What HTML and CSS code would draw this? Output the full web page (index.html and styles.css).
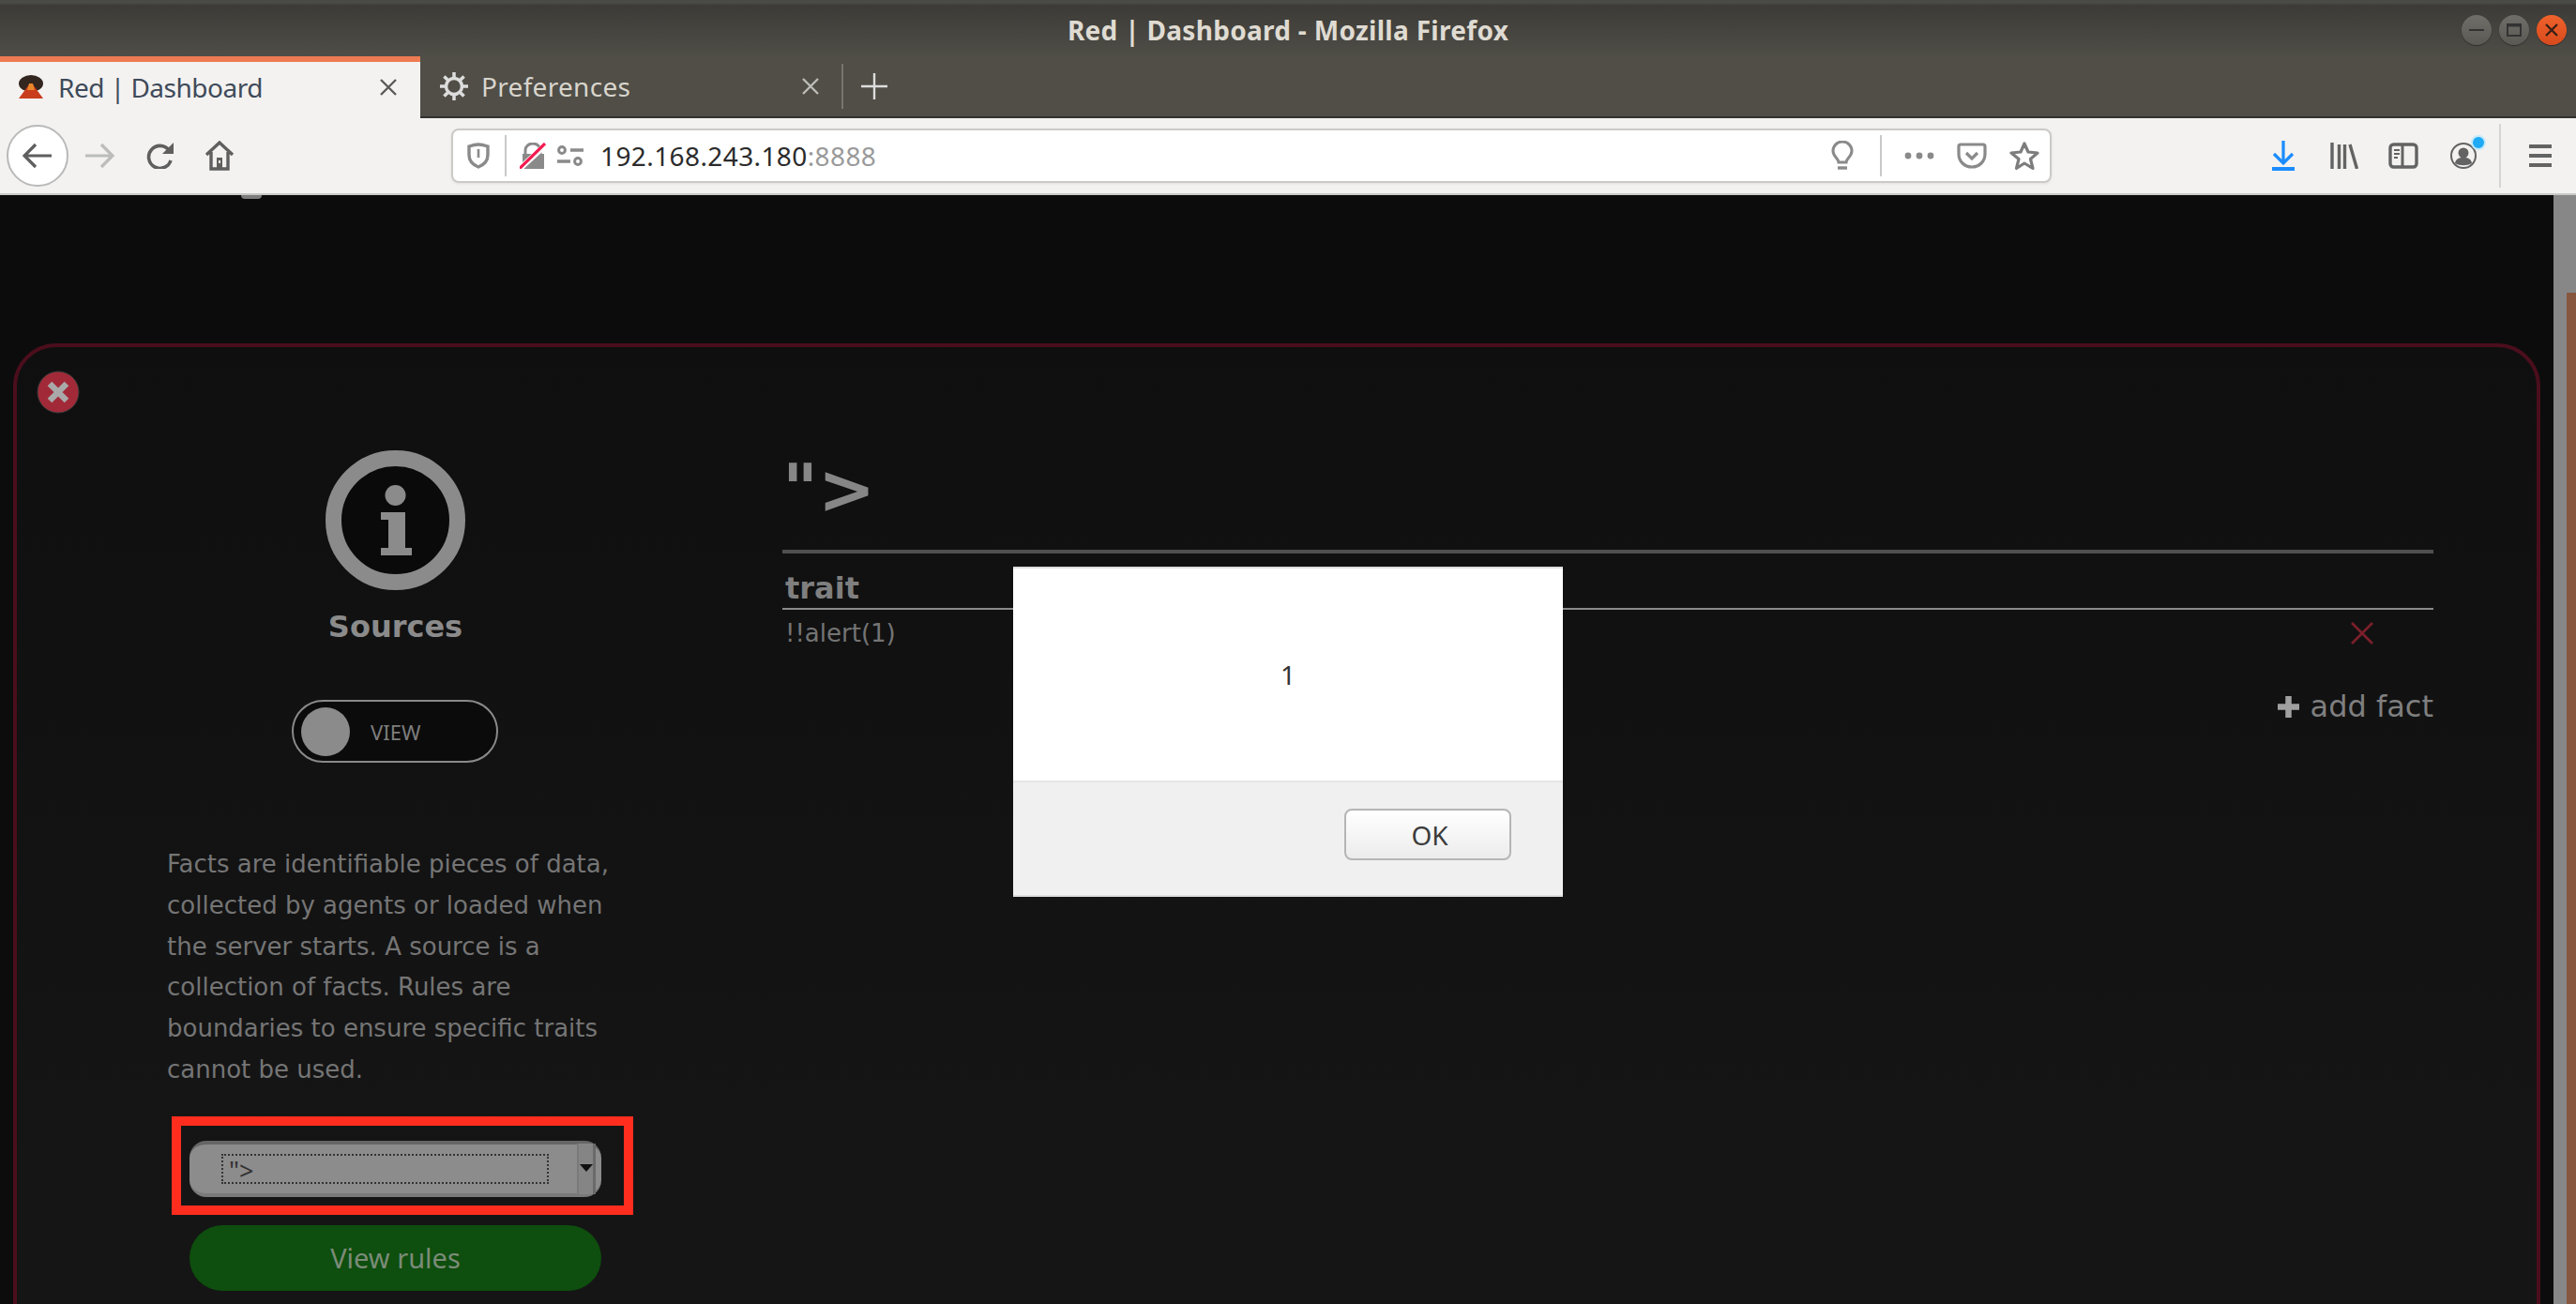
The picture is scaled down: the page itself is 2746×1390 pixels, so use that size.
FILE: index.html
```html
<!DOCTYPE html>
<html lang="en">
<head>
    <meta charset="UTF-8">
    <meta name="viewport" content="width=device-width, initial-scale=1.0">
    <title>Red | Dashboard - Mozilla Firefox</title>
    <link rel="stylesheet" href="styles.css">
</head>
<body>

    <header class="chrome">
        <div class="titlebar">
            <span class="win-title">Red | Dashboard - Mozilla Firefox</span>
            <div class="win-buttons">
                <span class="win-btn"><svg viewBox="0 0 32 32" width="32" height="32"><path d="M8 16h16" stroke="#333" stroke-width="2"/></svg></span>
                <span class="win-btn"><svg viewBox="0 0 32 32" width="32" height="32"><rect x="9" y="10" width="14" height="12" fill="none" stroke="#333" stroke-width="2"/><path d="M9 11h14" stroke="#333" stroke-width="3"/></svg></span>
                <span class="win-btn win-close"><svg viewBox="0 0 32 32" width="32" height="32"><path d="M10 10l12 12M22 10L10 22" stroke="#3a2015" stroke-width="2.4"/></svg></span>
            </div>
        </div>
        <div class="tabstrip">
            <div class="tab tab-active">
                <svg class="favicon" viewBox="0 0 30 26" width="30" height="26"><ellipse cx="15" cy="9" rx="13" ry="9" fill="#33261f"/><path d="M13 10h4l11 15H2z" fill="#c93c1c"/><path d="M13 9h4l2 7h-8z" fill="#e8872a"/></svg>
                <span class="tab-label">Red | Dashboard</span>
                <svg class="tab-x" viewBox="0 0 20 20" width="20" height="20"><path d="M2 2l16 16M18 2L2 18" stroke="#5a5a5a" stroke-width="2.4"/></svg>
            </div>
            <div class="tab tab-other">
                <svg class="gear" viewBox="0 0 32 32" width="32" height="32"><circle cx="16" cy="16" r="8.5" fill="none" stroke="#ddd" stroke-width="3.5"/><path d="M16 1v6M16 25v6M1 16h6M25 16h6M5.4 5.4l4.2 4.2M22.4 22.4l4.2 4.2M26.6 5.4l-4.2 4.2M9.6 22.4l-4.2 4.2" stroke="#ddd" stroke-width="3.5"/></svg>
                <span class="tab-label">Preferences</span>
                <svg class="tab-x" viewBox="0 0 20 20" width="20" height="20"><path d="M2 2l16 16M18 2L2 18" stroke="#bdbcb7" stroke-width="2.4"/></svg>
            </div>
            <svg class="new-tab" viewBox="0 0 28 28" width="28" height="28"><path d="M14 0v28M0 14h28" stroke="#ddd" stroke-width="2.4"/></svg>
        </div>
        <nav class="toolbar">
            <span class="back-btn"><svg viewBox="0 0 32 28" width="32" height="28"><path d="M31 14H3M14 2L2 14l12 12" fill="none" stroke="#5f5f5f" stroke-width="3.2"/></svg></span>
            <svg class="ico-forward" viewBox="0 0 32 28" width="32" height="28"><path d="M1 14h28M18 2l12 12-12 12" fill="none" stroke="#bcbcbc" stroke-width="3.2"/></svg>
            <svg class="ico-reload" viewBox="0 0 32 28" width="32" height="28"><path d="M25 8A12 12 0 1 0 27 19" fill="none" stroke="#5f5f5f" stroke-width="3.6"/><path d="M30 0v12H18z" fill="#5f5f5f"/></svg>
            <svg class="ico-home" viewBox="0 0 32 32" width="32" height="32"><path d="M2 15L16 2l14 13M7 12v18h18V12" fill="none" stroke="#5f5f5f" stroke-width="3.4"/><rect x="13" y="18" width="6" height="12" fill="#5f5f5f"/><rect x="15" y="21" width="2" height="3" fill="#f3f2f0"/></svg>

            <div class="urlbar">
                <svg class="ico-shield" viewBox="0 0 24 28" width="24" height="28"><path d="M12 2C8 2 5 3 2 4v9c0 7 5 11 10 13 5-2 10-6 10-13V4c-3-1-6-2-10-2z" fill="none" stroke="#8a8a8a" stroke-width="3.4"/><path d="M12 7v9" stroke="#8a8a8a" stroke-width="2.6"/></svg>
                <i class="url-sep"></i>
                <svg class="ico-lock" viewBox="0 0 28 28" width="28" height="28"><path d="M6 12V8a8 7 0 0 1 16 0v4" fill="none" stroke="#8a8a8a" stroke-width="3"/><rect x="3" y="12" width="23" height="16" fill="#8a8a8a"/><path d="M1 27L27 3" stroke="#fff" stroke-width="6"/><path d="M0 27.5L27 1" stroke="#f3194f" stroke-width="3.2"/></svg>
                <svg class="ico-perm" viewBox="0 0 28 24" width="28" height="24"><circle cx="5" cy="6" r="3.4" fill="none" stroke="#8a8a8a" stroke-width="3"/><path d="M14 6h14M0 18h14" stroke="#8a8a8a" stroke-width="3.4"/><circle cx="22" cy="18" r="3.4" fill="none" stroke="#8a8a8a" stroke-width="3"/></svg>
                <span class="url-text">192.168.243.180<span class="url-port">:8888</span></span>
                <svg class="ico-bulb" viewBox="0 0 24 32" width="24" height="32"><path d="M8 23c0-4-6-6-6-12a10 10 0 0 1 20 0c0 6-6 8-6 12z" fill="none" stroke="#8a8a8a" stroke-width="3"/><path d="M7 29h10" stroke="#8a8a8a" stroke-width="3.4"/></svg>
                <i class="url-sep url-sep-right"></i>
                <svg class="ico-dots" viewBox="0 0 32 8" width="32" height="8"><circle cx="4" cy="4" r="3.4" fill="#8a8a8a"/><circle cx="16" cy="4" r="3.4" fill="#8a8a8a"/><circle cx="28" cy="4" r="3.4" fill="#8a8a8a"/></svg>
                <svg class="ico-pocket" viewBox="0 0 32 28" width="32" height="28"><path d="M4 2h24a2 2 0 0 1 2 2v8c0 8-6 14-14 14S2 20 2 12V4a2 2 0 0 1 2-2z" fill="none" stroke="#8a8a8a" stroke-width="3.2"/><path d="M10 11l6 6 6-6" fill="none" stroke="#8a8a8a" stroke-width="3.2"/></svg>
                <svg class="ico-star" viewBox="0 0 32 32" width="32" height="32"><path d="M16 3l4 9 10 1-7.500 6.500 2.500 10L16 24l-8.500 5.500 2.500-10L2 13l10-1z" fill="none" stroke="#7d7d7d" stroke-width="3.2" stroke-linejoin="round"/></svg>
            </div>

            <svg class="ico-download" viewBox="0 0 24 32" width="24" height="32"><path d="M12 0v25M2 14l10 10 10-10" fill="none" stroke="#1a8cff" stroke-width="3.2"/><path d="M0 30h24" stroke="#1a8cff" stroke-width="4"/></svg>
            <svg class="ico-library" viewBox="0 0 30 28" width="30" height="28"><path d="M2 0v28M9.500 2v26M15.500 2v26M21 2l7.500 26" stroke="#636363" stroke-width="3.4" fill="none"/></svg>
            <svg class="ico-sidebar" viewBox="0 0 32 28" width="32" height="28"><rect x="2" y="2" width="28" height="24" rx="3.500" fill="none" stroke="#636363" stroke-width="3.4"/><path d="M15 2v24" stroke="#636363" stroke-width="3"/><path d="M6 8h6M6 12h6M6 16h4" stroke="#636363" stroke-width="2"/></svg>
            <span class="account">
                <svg viewBox="0 0 28 28" width="28" height="28"><circle cx="14" cy="14" r="13" fill="none" stroke="#636363" stroke-width="2"/><circle cx="14" cy="11" r="5.500" fill="#636363"/><path d="M5 22c1-5 4-6 9-6s8 1 9 6c-5 3-13 3-18 0z" fill="#636363"/></svg>
                <i class="account-dot"></i>
            </span>
            <i class="toolbar-sep"></i>
            <svg class="ico-menu" viewBox="0 0 24 24" width="24" height="24"><path d="M0 2h24M0 12h24M0 22h24" stroke="#636363" stroke-width="4"/></svg>
        </nav>
    </header>

    <div class="viewport">
        <main class="page">
            <i class="heading-tail"></i>

            <section class="panel">
                <svg class="panel-close" viewBox="0 0 46 46" width="46" height="46"><circle cx="23" cy="23" r="22" fill="#a22a38" stroke="#3a3a3a" stroke-width="1"/><path d="M14 14l18 18M32 14L14 32" stroke="#a9a9a9" stroke-width="6.500"/></svg>

                <div class="side">
                    <svg class="info-icon" viewBox="0 0 149 149" width="149" height="149"><circle cx="74.500" cy="74.500" r="66" fill="#0a0a0a" stroke="#8b8b8b" stroke-width="17"/><circle cx="74.500" cy="48" r="11" fill="#8b8b8b"/><path d="M59 66h26v38h7v8H59v-8h8V74h-8z" fill="#8b8b8b"/></svg>
                    <h2 class="side-title">Sources</h2>
                    <div class="toggle">
                        <i class="toggle-knob"></i>
                        <span class="toggle-label">VIEW</span>
                    </div>
                    <p class="side-text">Facts are identifiable pieces of data,<br>collected by agents or loaded when<br>the server starts. A source is a<br>collection of facts. Rules are<br>boundaries to ensure specific traits<br>cannot be used.</p>
                    <div class="select-wrap">
                        <div class="select">
                            <span class="select-focus">"&gt;</span>
                            <span class="select-arrow"></span>
                        </div>
                        <i class="annotation"></i>
                    </div>
                    <button class="rules-btn">View rules</button>
                </div>

                <div class="detail">
                    <h1 class="detail-title">"&gt;</h1>
                    <div class="col-head">trait</div>
                    <div class="fact-row">
                        <span>!!alert(1)</span>
                        <svg class="fact-x" viewBox="0 0 24 24" width="24" height="24"><path d="M1 1l22 22M23 1L1 23" stroke="#7c1f2b" stroke-width="2.600"/></svg>
                    </div>
                    <div class="add-fact">
                        <svg viewBox="0 0 25 25" width="25" height="25"><path d="M12.500 1v23M1 12.500h23" stroke="#a0a0a0" stroke-width="6.500"/></svg>
                        <span>add fact</span>
                    </div>
                </div>
            </section>

            <div class="alert">
                <div class="alert-body">1</div>
                <div class="alert-foot"><button class="alert-ok">OK</button></div>
            </div>
        </main>
        <div class="scrollbar"><div class="scroll-thumb"></div></div>
    </div>

</body>
</html>
```

FILE: styles.css
```css
* {
    box-sizing: border-box;
}

html, body {
    margin: 0;
    padding: 0;
    height: 100%;
    overflow: hidden;
}

body {
    display: flex;
    flex-direction: column;
    background-color: #0c0c0c;
    font-family: 'Noto Sans', sans-serif;
}

i {
    display: block;
}

svg {
    display: block;
    flex: none;
}

/* window + browser chrome */
.chrome {
    flex: none;
    background: linear-gradient(#4a4a47 0, #4a4a47 3px, #3c3b37 6px, #504e47 62px, #504e47 100%);
}

.titlebar {
    height: 60px;
    display: grid;
    grid-template-columns: 1fr auto 1fr;
    align-items: center;
}

.win-title {
    grid-column: 2;
    color: #dfdbd2;
    font-size: 28px;
    font-weight: 700;
    letter-spacing: 0.3px;
    padding-top: 3px;
}

.win-buttons {
    grid-column: 3;
    justify-self: end;
    display: flex;
    gap: 8px;
    margin-right: 10px;
    margin-top: 4px;
}

.win-btn {
    width: 32px;
    height: 32px;
    border-radius: 50%;
    background: linear-gradient(#6f6e69, #5a5954);
    box-shadow: 0 1px 1px #2f2e2b;
}

.win-close {
    background: linear-gradient(#f0622c, #d84a1c);
}

.tabstrip {
    height: 66px;
    display: flex;
    align-items: center;
    border-bottom: 2px solid #33322f;
}

.tab {
    height: 64px;
    display: flex;
    align-items: center;
    font-size: 28px;
}

.tab-active {
    width: 448px;
    padding: 0 24px 6px 18px;
    background-color: #f3f2f0;
    border-top: 6px solid #ee7b52;
    color: #3f4a5a;
    margin-bottom: -2px;
    height: 66px;
}

.tab-active .tab-label {
    margin-left: 14px;
    flex: 1;
    letter-spacing: -0.5px;
}

.tab-other {
    width: 451px;
    padding: 0 23px 0 20px;
    color: #d8d5cd;
    border-right: 2px solid #77756e;
    height: 48px;
}

.tab-other .tab-label {
    margin-left: 13px;
    flex: 1;
    letter-spacing: 0.3px;
}

.new-tab {
    margin-left: 19px;
}

.toolbar {
    height: 82px;
    background-color: #f3f2f0;
    border-bottom: 2px solid #c9c9c7;
    display: flex;
    align-items: center;
    padding-left: 7px;
}

.back-btn {
    width: 66px;
    height: 66px;
    border-radius: 50%;
    background-color: #fff;
    border: 2px solid #b9b9b9;
    display: flex;
    align-items: center;
    justify-content: center;
}

.ico-forward { margin-left: 17px; }
.ico-reload { margin-left: 33px; }
.ico-home { margin-left: 31px; }

.urlbar {
    width: 1706px;
    height: 58px;
    margin-left: 231px;
    background-color: #fff;
    border: 2px solid #cbcac7;
    border-radius: 8px;
    box-shadow: 0 1px 3px rgba(0, 0, 0, 0.08);
    display: flex;
    align-items: center;
    padding: 0 11px 0 15px;
}

.url-sep {
    width: 2px;
    height: 44px;
    background-color: #c9c9c9;
    margin-left: 16px;
}

.ico-lock { margin-left: 14px; }
.ico-perm { margin-left: 12px; }

.url-text {
    margin-left: 18px;
    font-size: 28px;
    letter-spacing: 0.4px;
    color: #2b2b2b;
    flex: 1;
}

.url-port {
    color: #9a9a9a;
}

.url-sep-right { margin-left: 28px; }
.ico-dots { margin-left: 24px; }
.ico-pocket { margin-left: 24px; }
.ico-star { margin-left: 24px; }

.ico-download { margin-left: 235px; }
.ico-library { margin-left: 38px; }
.ico-sidebar { margin-left: 32px; }

.account {
    position: relative;
    margin-left: 34px;
}

.account-dot {
    position: absolute;
    left: 24px;
    top: -6px;
    width: 12px;
    height: 12px;
    border-radius: 50%;
    background-color: #1eaaf5;
    box-shadow: 0 0 0 2px #c4e9fb;
}

.toolbar-sep {
    width: 2px;
    height: 68px;
    background-color: #d5d4d1;
    margin-left: 24px;
}

.ico-menu { margin-left: 30px; }

/* page */
.viewport {
    flex: 1;
    min-height: 0;
    display: flex;
}

.page {
    flex: 1;
    min-width: 0;
    position: relative;
    overflow: hidden;
    font-family: 'DejaVu Sans', sans-serif;
    color: #7f7f7f;
}

.heading-tail {
    position: absolute;
    left: 257px;
    top: 0;
    width: 22px;
    height: 4px;
    background-color: #7d7d7d;
    border-radius: 0 0 10px 10px;
}

.panel {
    position: relative;
    margin: 158px 14px 0;
    height: 1400px;
    background: linear-gradient(#0f0f10, #151515 900px);
    border: 4px solid #4b0e1c;
    border-radius: 46px;
    display: grid;
    grid-template-columns: 806px 1fr;
    column-gap: 10px;
    padding-right: 110px;
}

.panel-close {
    position: absolute;
    left: 21px;
    top: 25px;
}

.side {
    display: flex;
    flex-direction: column;
    align-items: center;
    padding-top: 110px;
}

.side-title {
    margin: 20px 0 0 1px;
    font-size: 32px;
    line-height: 38px;
    font-weight: 700;
    color: #8b8b8b;
}

.toggle {
    width: 220px;
    height: 67px;
    margin-top: 59px;
    border: 2px solid #8a8a8a;
    border-radius: 34px;
    background-color: #0b0b0b;
    display: flex;
    align-items: center;
    padding-left: 8px;
}

.toggle-knob {
    width: 52px;
    height: 52px;
    border-radius: 50%;
    background-color: #8b8b8b;
}

.toggle-label {
    margin-left: 22px;
    font-family: 'Noto Sans', sans-serif;
    font-size: 22px;
    color: #7d7d7d;
}

.side-text {
    width: 490px;
    margin: 87px 0 0 4px;
    font-size: 26px;
    line-height: 43.800px;
    color: #757575;
}

.select-wrap {
    position: relative;
    width: 439px;
    margin: 53px 0 0 1px;
}

.select {
    height: 60px;
    background-color: #8c8c8c;
    border-top: 4px solid #666;
    border-bottom: 4px solid #7a7a7a;
    border-radius: 18px;
    position: relative;
    padding: 10px 56px 0 34px;
    font-family: 'Noto Sans', sans-serif;
    color: #333;
}

.select-focus {
    display: block;
    height: 32px;
    border: 2px dotted #333;
    padding-left: 6px;
    font-size: 27px;
    line-height: 32px;
}

.select-arrow {
    position: absolute;
    right: 6px;
    top: -1px;
    bottom: -1px;
    width: 20px;
    background-color: #858585;
    border-left: 2px solid #7a7a7a;
    border-right: 3px solid #6a6a6a;
}

.select-arrow::after {
    content: '';
    position: absolute;
    left: 1px;
    top: 22px;
    border: 7px solid transparent;
    border-top: 8px solid #111;
    border-bottom: 0;
}

.annotation {
    position: absolute;
    left: -19px;
    right: -34px;
    top: -26px;
    bottom: -19px;
    border: 10px solid #ff2d1e;
}

.rules-btn {
    width: 439px;
    height: 70px;
    margin: 30px 0 0 1px;
    border: none;
    border-radius: 35px;
    background-color: #0e4e0e;
    color: #7b8b78;
    font-family: 'Noto Sans', sans-serif;
    font-size: 29px;
}

.detail {
    padding-top: 110px;
}

.detail-title {
    margin: 0;
    height: 110px;
    font-size: 73px;
    line-height: 84px;
    font-weight: 700;
    color: #868686;
    border-bottom: 4px solid #4f4f4f;
}

.col-head {
    height: 60px;
    padding: 18px 0 0 3px;
    font-size: 32px;
    line-height: 38px;
    font-weight: 700;
    color: #7f7f7f;
    border-bottom: 2px solid #8a8a8a;
}

.fact-row {
    display: flex;
    align-items: center;
    justify-content: space-between;
    padding: 10px 64px 0 3px;
    font-size: 26px;
    line-height: 30px;
    color: #747474;
}

.add-fact {
    margin-top: 44px;
    display: flex;
    align-items: center;
    justify-content: flex-end;
    gap: 11px;
    font-size: 32px;
    line-height: 38px;
    color: #7f7f7f;
}

/* the browser's alert */
.alert {
    position: absolute;
    left: 1080px;
    top: 396px;
    width: 586px;
    height: 352px;
    background-color: #fff;
    border-top: 2px solid #ddd;
    border-bottom: 2px solid #ddd;
    display: flex;
    flex-direction: column;
    font-family: 'Noto Sans', sans-serif;
    color: #333;
}

.alert-body {
    height: 228px;
    display: flex;
    align-items: center;
    justify-content: center;
    font-size: 28px;
    border-bottom: 2px solid #e6e6e6;
}

.alert-foot {
    flex: 1;
    background-color: #f0f0f0;
    padding: 28px 55px 0 0;
    display: flex;
    justify-content: flex-end;
    align-items: flex-start;
}

.alert-ok {
    width: 178px;
    height: 55px;
    border: 2px solid #b5b5b5;
    border-radius: 8px;
    background: linear-gradient(#fff, #ececec);
    color: #3c3c3c;
    font-family: 'Noto Sans', sans-serif;
    font-size: 28px;
    padding: 0 0 0 4px;
}

.scrollbar {
    flex: none;
    width: 24px;
    background-color: #878787;
    padding-top: 104px;
    display: flex;
    justify-content: flex-end;
}

.scroll-thumb {
    width: 10px;
    background-color: #87573f;
}
```
